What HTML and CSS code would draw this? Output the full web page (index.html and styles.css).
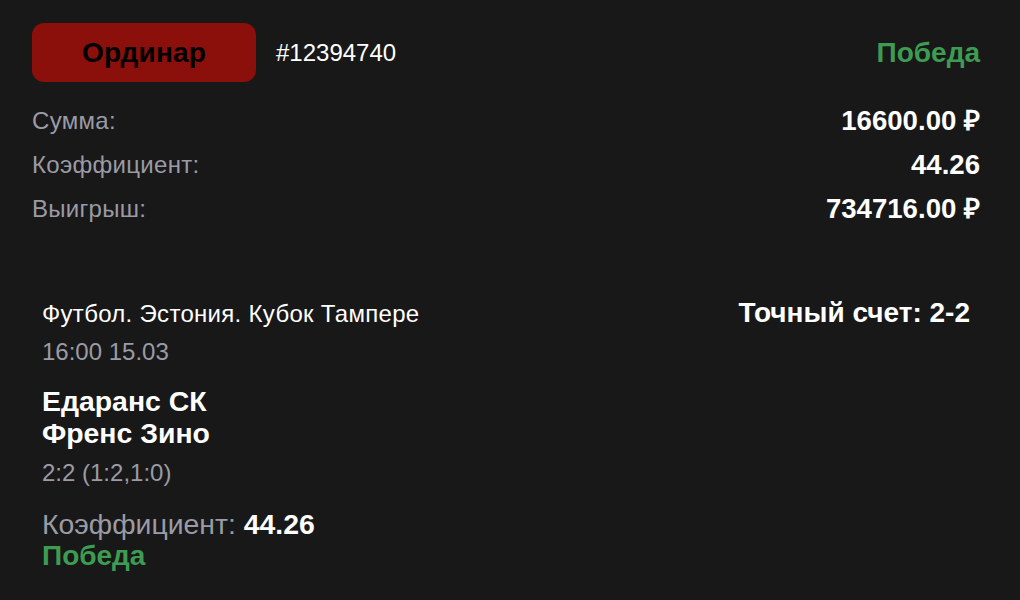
FILE: index.html
```html
<!DOCTYPE html>
<html lang="ru">
<head>
<meta charset="utf-8">
<link rel="stylesheet" href="styles.css">
</head>
<body>
<div class="page">
  <div class="head">
    <div class="head-left">
      <div class="type-btn">Ординар</div>
      <div class="bet-id">#12394740</div>
    </div>
    <div class="status">Победа</div>
  </div>
  <div class="summary">
    <div class="row"><span class="label">Сумма:</span><span class="value">16600.00 ₽</span></div>
    <div class="row"><span class="label">Коэффициент:</span><span class="value">44.26</span></div>
    <div class="row"><span class="label">Выигрыш:</span><span class="value">734716.00 ₽</span></div>
  </div>
  <div class="event">
    <div class="event-top">
      <div class="league">Футбол. Эстония. Кубок Тампере</div>
      <div class="market">Точный счет: 2-2</div>
    </div>
    <div class="time">16:00 15.03</div>
    <div class="teams">
      <div>Едаранс СК</div>
      <div>Френс Зино</div>
    </div>
    <div class="score">2:2 (1:2,1:0)</div>
    <div class="coef"><span class="coef-label">Коэффициент:</span> <b>44.26</b></div>
    <div class="result">Победа</div>
  </div>
</div>
</body>
</html>
```
FILE: styles.css
```css
html, body {
  margin: 0;
  background: #181818;
  color: #ffffff;
  font-family: "Liberation Sans", Arial, sans-serif;
}
.page {
  padding: 23px 40px 0 32px;
}
.head {
  display: flex;
  justify-content: space-between;
  align-items: center;
  height: 59px;
}
.head-left {
  display: flex;
  align-items: center;
  gap: 20px;
}
.type-btn {
  width: 224px;
  height: 59px;
  border-radius: 12px;
  background: #8b0f0a;
  color: #000;
  font-weight: bold;
  font-size: 28px;
  letter-spacing: 0.2px;
  display: flex;
  align-items: center;
  justify-content: center;
}
.bet-id {
  font-size: 24px;
}
.status {
  color: #3d9c52;
  font-weight: bold;
  font-size: 28px;
}
.summary {
  margin-top: 17px;
  display: flex;
  flex-direction: column;
}
.row {
  display: flex;
  justify-content: space-between;
  align-items: center;
  height: 44px;
}
.label {
  color: #9a9ba5;
  font-size: 24px;
  letter-spacing: 0.3px;
}
.value {
  font-weight: bold;
  font-size: 27.6px;
  line-height: 28px;
}
.event {
  margin-top: 66px;
  padding: 0 10px;
}
.event-top {
  display: flex;
  justify-content: space-between;
  align-items: baseline;
  line-height: 32px;
}
.league {
  font-size: 24px;
  letter-spacing: 0.3px;
}
.market {
  font-weight: bold;
  font-size: 28px;
}
.time {
  color: #9a9ba5;
  font-size: 24px;
  line-height: 32px;
  margin-top: 6px;
}
.teams {
  margin-top: 17px;
  font-weight: bold;
  font-size: 28.4px;
  line-height: 32px;
}
.score {
  color: #9a9ba5;
  font-size: 24px;
  line-height: 32px;
  margin-top: 8px;
}
.coef {
  margin-top: 19px;
  font-size: 28.4px;
  line-height: 32px;
}
.coef-label {
  color: #9a9ba5;
}
.result {
  color: #3d9c52;
  font-weight: bold;
  font-size: 28px;
  line-height: 32px;
}
```
